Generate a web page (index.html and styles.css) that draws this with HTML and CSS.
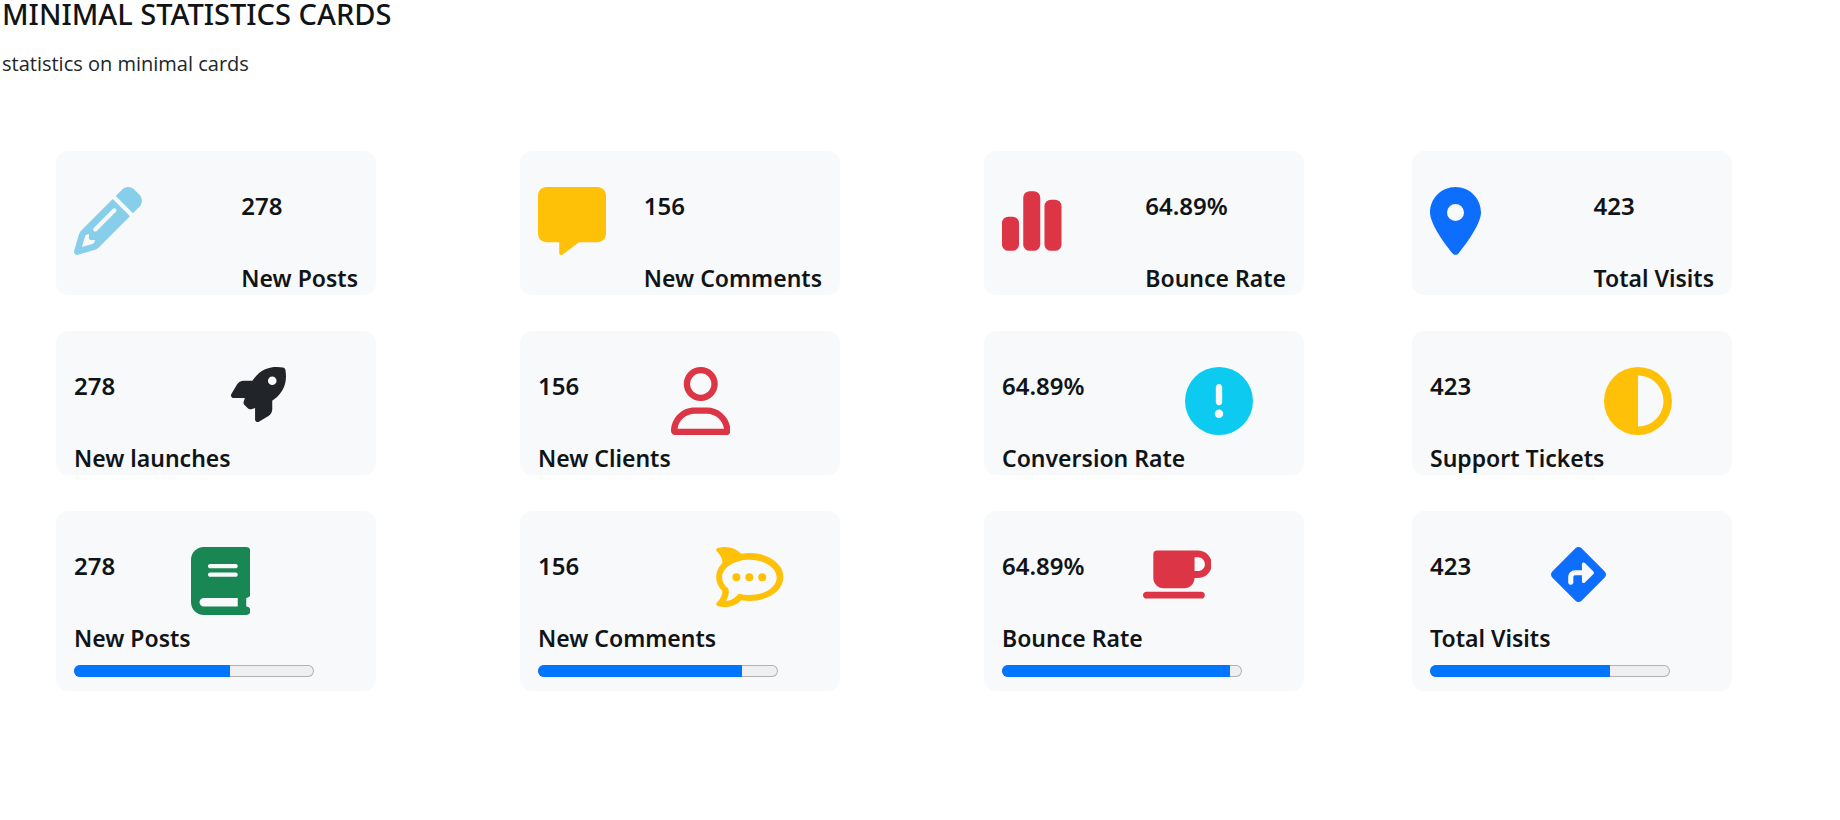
FILE: index.html
```html
<!DOCTYPE html>
<html lang="en">
<head>
<meta charset="utf-8">
<title>Minimal Statistics Cards</title>
<link rel="stylesheet" href="styles.css">
</head>
<body>
<header class="page-header">
  <h1 class="page-title">MINIMAL STATISTICS CARDS</h1>
  <p class="page-subtitle">statistics on minimal cards</p>
</header>
<main class="cards">
  <section class="card card-split">
    <svg class="icon sky" viewBox="0 0 512 512" aria-hidden="true"><path d="M410.3 231l11.3-11.3-33.9-33.9-62.1-62.1L291.7 89.8l-11.3 11.3-22.6 22.6L58.6 322.9c-10.4 10.4-18 23.3-22.2 37.4L1 480.7c-2.5 8.4-.2 17.5 6.1 23.7s15.3 8.5 23.7 6.1l120.3-35.4c14.1-4.2 27-11.8 37.4-22.2L387.7 253.7 410.3 231zM160 399.4l-9.1 22.7c-4 3.1-8.5 5.4-13.3 6.9L59.4 452l23-78.1c1.4-4.9 3.8-9.4 6.9-13.3l22.7-9.1v32c0 8.8 7.2 16 16 16h32zM362.7 18.7L348.3 33.2 325.7 55.8 314.3 67.1l33.9 33.9 62.1 62.1 33.9 33.9 11.3-11.3 22.6-22.6 14.5-14.5c25-25 25-65.5 0-90.5L453.3 18.7c-25-25-65.5-25-90.5 0zm-47.4 168l-144 144c-6.2 6.2-16.4 6.2-22.6 0s-6.2-16.4 0-22.6l144-144c6.2-6.2 16.4-6.2 22.6 0s6.2 16.4 0 22.6z"/></svg>
    <div class="stat"><p class="value">278</p><h2 class="label">New Posts</h2></div>
  </section>
  <section class="card card-split">
    <svg class="icon yellow" viewBox="0 0 512 512" aria-hidden="true"><path d="M64 0C28.7 0 0 28.7 0 64V352c0 35.3 28.7 64 64 64h96v80c0 6.1 3.4 11.6 8.8 14.3s11.9 2.1 16.8-1.5L309.3 416H448c35.3 0 64-28.7 64-64V64c0-35.3-28.7-64-64-64H64z"/></svg>
    <div class="stat"><p class="value">156</p><h2 class="label">New Comments</h2></div>
  </section>
  <section class="card card-split">
    <svg class="icon red" viewBox="0 0 448 512" aria-hidden="true"><rect y="224" width="128" height="256" rx="48"/><rect x="160" y="32" width="128" height="448" rx="48"/><rect x="320" y="96" width="128" height="384" rx="48"/></svg>
    <div class="stat"><p class="value">64.89%</p><h2 class="label">Bounce Rate</h2></div>
  </section>
  <section class="card card-split">
    <svg class="icon blue" viewBox="0 0 384 512" aria-hidden="true"><path d="M215.7 499.2C267 435 384 279.4 384 192C384 86 298 0 192 0S0 86 0 192c0 87.4 117 243 168.3 307.2c12.3 15.3 35.1 15.3 47.4 0zM192 128a64 64 0 1 1 0 128 64 64 0 1 1 0-128z"/></svg>
    <div class="stat"><p class="value">423</p><h2 class="label">Total Visits</h2></div>
  </section>

  <section class="card">
    <div class="stat"><p class="value">278</p><h2 class="label">New launches</h2></div>
    <svg class="icon icon-small dark" viewBox="0 0 512 512" aria-hidden="true"><path d="M156.6 384.9L125.7 354c-8.5-8.5-11.5-20.8-7.7-32.2c3-8.9 7-20.5 11.8-33.8L24 288c-8.6 0-16.6-4.6-20.9-12.1s-4.2-16.7 .2-24.1l52.5-88.5c13-21.9 36.5-35.3 61.9-35.3l82.3 0c2.4-4 4.8-7.7 7.2-11.3C289.1-4.1 411.1-8.1 483.9 5.3c11.6 2.1 20.6 11.2 22.8 22.8c13.4 72.9 9.3 194.8-111.4 276.7c-3.5 2.4-7.3 4.8-11.3 7.2v82.3c0 25.4-13.4 49-35.3 61.9l-88.5 52.5c-7.4 4.4-16.6 4.5-24.1 .2s-12.1-12.2-12.1-20.9V380.8c-14.1 4.9-26.4 8.9-35.7 11.9c-11.2 3.6-23.4 .5-31.8-7.8zM384 168a40 40 0 1 0 0-80 40 40 0 1 0 0 80z"/></svg>
  </section>
  <section class="card">
    <div class="stat"><p class="value">156</p><h2 class="label">New Clients</h2></div>
    <svg class="icon red" viewBox="0 0 448 512" aria-hidden="true"><path d="M304 128a80 80 0 1 0 -160 0 80 80 0 1 0 160 0zM96 128a128 128 0 1 1 256 0A128 128 0 1 1 96 128zM49.3 464H398.7c-8.9-63.3-63.3-112-129-112H178.3c-65.7 0-120.1 48.7-129 112zM0 482.3C0 383.8 79.8 304 178.3 304h91.4C368.2 304 448 383.8 448 482.3c0 16.4-13.3 29.7-29.7 29.7H29.7C13.3 512 0 498.7 0 482.3z"/></svg>
  </section>
  <section class="card">
    <div class="stat"><p class="value">64.89%</p><h2 class="label">Conversion Rate</h2></div>
    <svg class="icon cyan" viewBox="0 0 512 512" aria-hidden="true"><path d="M256 512A256 256 0 1 0 256 0a256 256 0 1 0 0 512zm0-384c13.3 0 24 10.7 24 24V264c0 13.3-10.7 24-24 24s-24-10.7-24-24V152c0-13.3 10.7-24 24-24zM224 352a32 32 0 1 1 64 0 32 32 0 1 1 -64 0z"/></svg>
  </section>
  <section class="card">
    <div class="stat"><p class="value">423</p><h2 class="label">Support Tickets</h2></div>
    <svg class="icon yellow" viewBox="0 0 512 512" aria-hidden="true"><path d="M448 256c0-106-86-192-192-192V448c106 0 192-86 192-192zM0 256a256 256 0 1 1 512 0A256 256 0 1 1 0 256z"/></svg>
  </section>

  <section class="card">
    <div class="stat"><p class="value">278</p><h2 class="label">New Posts</h2></div>
    <svg class="icon green" viewBox="0 0 448 512" aria-hidden="true"><path d="M96 0C43 0 0 43 0 96V416c0 53 43 96 96 96H384h32c17.7 0 32-14.3 32-32s-14.3-32-32-32V384c17.7 0 32-14.3 32-32V32c0-17.7-14.3-32-32-32H384 96zm0 384H352v64H96c-17.7 0-32-14.3-32-32s14.3-32 32-32zm32-240c0-8.8 7.2-16 16-16H336c8.8 0 16 7.2 16 16s-7.2 16-16 16H144c-8.8 0-16-7.2-16-16zm16 48H336c8.8 0 16 7.2 16 16s-7.2 16-16 16H144c-8.8 0-16-7.2-16-16s7.2-16 16-16z"/></svg>
    <progress class="meter" value="65" max="100" aria-label="New Posts"></progress>
  </section>
  <section class="card">
    <div class="stat"><p class="value">156</p><h2 class="label">New Comments</h2></div>
    <svg class="icon icon-chat yellow" viewBox="0 0 576 512" aria-hidden="true"><path fill-rule="evenodd" d="M284.046,224.8a34.114,34.114,0,1,0,34.317,34.113A34.217,34.217,0,0,0,284.046,224.8Zm-110.45,0a34.114,34.114,0,1,0,34.317,34.113A34.217,34.217,0,0,0,173.6,224.8Zm220.923,0a34.114,34.114,0,1,0,34.317,34.113A34.215,34.215,0,0,0,394.519,224.8ZM548.326,169.485c-15.535-24.172-37.31-45.57-64.681-63.618-52.886-34.817-122.374-54-195.666-54a405.975,405.975,0,0,0-72.032,6.357,238.524,238.524,0,0,0-49.51-36.588C99.684-11.7,40.859.711,11.135,11.421A14.291,14.291,0,0,0,5.58,34.782C26.542,56.458,61.222,99.3,52.7,138.252c-33.142,33.9-51.112,74.776-51.112,117.337,0,43.372,17.97,84.248,51.112,118.148,8.526,38.956-26.154,81.816-47.116,103.491a14.284,14.284,0,0,0,5.555,23.34c29.724,10.709,88.549,23.147,155.324-10.2a238.679,238.679,0,0,0,49.51-36.589A405.972,405.972,0,0,0,288,460.14c73.313,0,142.8-19.159,195.667-53.975,27.371-18.049,49.145-39.426,64.679-63.619,17.309-26.923,26.07-55.916,26.07-86.125C574.394,225.4,565.634,196.43,548.326,169.485ZM284.987,409.9a345.65,345.65,0,0,1-89.446-11.5l-20.129,19.393a184.366,184.366,0,0,1-37.138,27.585,145.767,145.767,0,0,1-52.522,14.87c.983-1.771,1.881-3.563,2.842-5.356q30.258-55.68,16.325-100.078c-32.992-25.962-52.778-59.2-52.778-95.4,0-83.1,104.254-150.469,232.846-150.469s232.867,67.373,232.867,150.469C517.854,342.525,413.6,409.9,284.987,409.9Z"/></svg>
    <progress class="meter" value="85" max="100" aria-label="New Comments"></progress>
  </section>
  <section class="card">
    <div class="stat"><p class="value">64.89%</p><h2 class="label">Bounce Rate</h2></div>
    <svg class="icon icon-small red" viewBox="0 0 640 512" aria-hidden="true"><path d="M96 64c0-17.7 14.3-32 32-32H448h64c70.7 0 128 57.3 128 128s-57.3 128-128 128H480c0 53-43 96-96 96H192c-53 0-96-43-96-96V64zM480 224h32c35.3 0 64-28.7 64-64s-28.7-64-64-64H480V224zM32 416H544c17.7 0 32 14.3 32 32s-14.3 32-32 32H32c-17.7 0-32-14.3-32-32s14.3-32 32-32z"/></svg>
    <progress class="meter" value="95" max="100" aria-label="Bounce Rate"></progress>
  </section>
  <section class="card">
    <div class="stat"><p class="value">423</p><h2 class="label">Total Visits</h2></div>
    <svg class="icon icon-small blue" viewBox="0 0 512 512" aria-hidden="true"><path d="M227.7 11.7c15.6-15.6 40.9-15.6 56.6 0l216 216c15.6 15.6 15.6 40.9 0 56.6l-216 216c-15.6 15.6-40.9 15.6-56.6 0l-216-216c-15.6-15.6-15.6-40.9 0-56.6l216-216zm87.6 137c-4.6-4.6-11.5-5.9-17.4-3.5s-9.9 8.3-9.9 14.8v56H224c-35.3 0-64 28.7-64 64v48c0 13.3 10.7 24 24 24s24-10.7 24-24V280c0-8.8 7.2-16 16-16h64v56c0 6.5 3.9 12.3 9.9 14.8s12.9 1.1 17.4-3.5l80-80c6.2-6.2 6.2-16.4 0-22.6l-80-80z"/></svg>
    <progress class="meter" value="75" max="100" aria-label="Total Visits"></progress>
  </section>
</main>
</body>
</html>
```
FILE: styles.css
```css
* {
  box-sizing: border-box;
}

body {
  margin: 0;
  background: #fff;
  color: #111416;
  font-family: "Noto Sans", "Open Sans", sans-serif;
}

.page-header {
  padding-left: 2px;
}

.page-title {
  margin: 0;
  font-size: 29px;
  font-weight: 500;
  line-height: 28px;
}

.page-subtitle {
  margin: 18px 0 0;
  color: #212529;
  font-family: "Open Sans", "Noto Sans", sans-serif;
  font-size: 20px;
  font-weight: 400;
  line-height: 36px;
}

.cards {
  display: grid;
  grid-template-columns: 464fr 464fr 428fr 428fr;
  row-gap: 36px;
  margin-top: 69px;
  padding-left: 56px;
}

.card {
  display: flex;
  flex-wrap: wrap;
  align-items: flex-start;
  width: 320px;
  padding: 36px 18px 0;
  border-radius: 12px;
  background: #f8f9fa;
}

.card-split {
  justify-content: space-between;
}

.stat {
  display: grid;
  row-gap: 36px;
}

.value,
.label {
  margin: 0;
  font-weight: 600;
  white-space: nowrap;
}

.value {
  font-size: 24px;
  line-height: 38px;
}

.label {
  font-size: 23px;
  line-height: 34px;
}

.icon {
  display: block;
  height: 68px;
  fill: currentColor;
}

.icon-small {
  height: 55px;
}

.icon-chat {
  height: 60px;
}

.meter {
  width: 240px;
  height: 12px;
  margin: 10px 0 14px;
  appearance: none;
}

.meter::-webkit-progress-bar {
  overflow: hidden;
  border-radius: 6px;
  background: #efefef;
  box-shadow: inset 0 0 0 1px #b2b2b2;
}

.meter::-webkit-progress-value {
  background: #0075ff;
}

.sky { color: #87ceeb; }
.yellow { color: #ffc107; }
.red { color: #dc3545; }
.blue { color: #0d6efd; }
.dark { color: #212529; }
.cyan { color: #0dcaf0; }
.green { color: #198754; }
```
